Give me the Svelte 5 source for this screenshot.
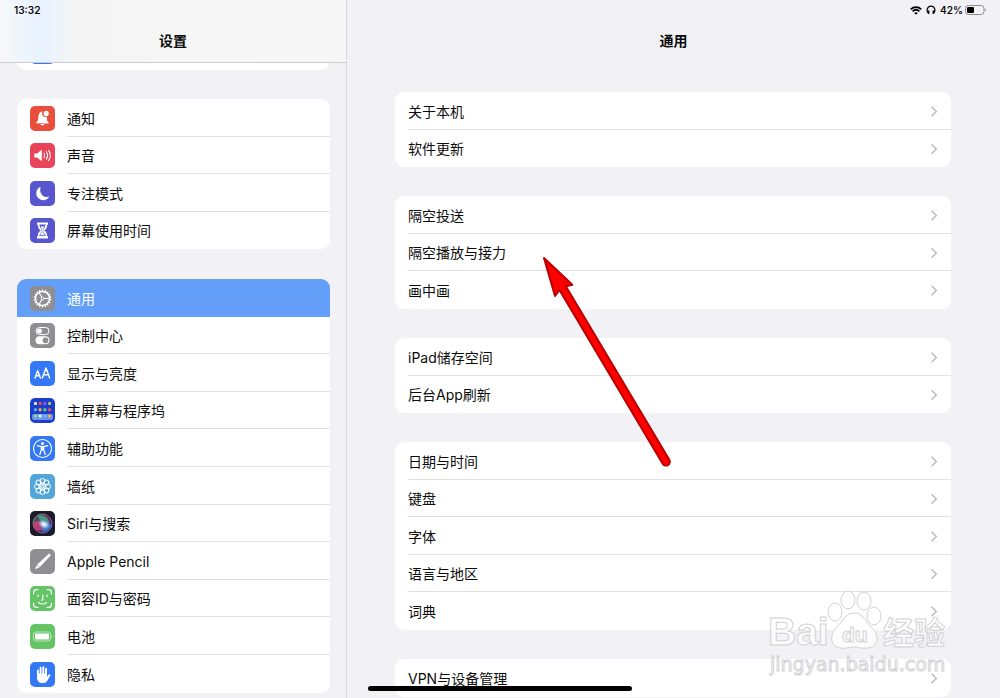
<script lang="ts">
	type Item = { icon: string; label: string; color: string };

	const sidebarGroups: Item[][] = [
		[
			{ icon: 'bell', label: '通知', color: '#ea4e3d' },
			{ icon: 'speaker', label: '声音', color: '#ea445a' },
			{ icon: 'moon', label: '专注模式', color: '#5756ce' },
			{ icon: 'hourglass', label: '屏幕使用时间', color: '#5756ce' },
		],
		[
			{ icon: 'gear', label: '通用', color: '#8e8e93' },
			{ icon: 'toggles', label: '控制中心', color: '#8e8e93' },
			{ icon: 'text', label: '显示与亮度', color: '#3478f6' },
			{ icon: 'home', label: '主屏幕与程序坞', color: '#1c3fcb' },
			{ icon: 'access', label: '辅助功能', color: '#3478f6' },
			{ icon: 'flower', label: '墙纸', color: '#54a5da' },
			{ icon: 'siri', label: 'Siri与搜索', color: '#1b1b2c' },
			{ icon: 'pencil', label: 'Apple Pencil', color: '#8e8e93' },
			{ icon: 'face', label: '面容ID与密码', color: '#65c466' },
			{ icon: 'battery', label: '电池', color: '#65c466' },
			{ icon: 'hand', label: '隐私', color: '#3478f6' },
		],
	];

	const generalGroups = [
		['关于本机', '软件更新'],
		['隔空投送', '隔空播放与接力', '画中画'],
		['iPad储存空间', '后台App刷新'],
		['日期与时间', '键盘', '字体', '语言与地区', '词典'],
		['VPN与设备管理'],
	];

	let selected = $state('通用');

	const teeth = Array.from({ length: 18 }, (_, i) => i * 20);
	const petals = Array.from({ length: 8 }, (_, i) => i * 45);
	const appDots = [
		['#e8e4c8', '#f0524f', '#9a5be0', '#a5cf55'],
		['#4cb4f0', '#f5a93c', '#5fd08a', '#ef4a5a'],
		['#7fe08a', '#e8f0ff', '#6cb8ff', '#f4a25e'],
	];
</script>

{#snippet icon(name: string)}
	<svg viewBox="0 0 25 25" width="25" height="25" aria-hidden="true">
		{#if name === 'bell'}
			<path d="M6 17.2c0-.9 1.9-1.5 2.2-4 .4-4 .5-7 4.2-7.9a3.5 3.5 0 0 0 4.3 5.2c.2 3.9.7 5.4 1.7 6 .4.3.4.7.4.9z" fill="#fff" />
			<path d="M10.500 18.1h4c-.3 1.900-3.700 1.900-4 0z" fill="#fff" />
			<circle cx="16.2" cy="7.4" r="2.6" fill="#fff" />
		{:else if name === 'speaker'}
			<path d="M4.300 10.400h2.900l3.800-3.200c.4-.3.8 0 .8.4v9.800c0 .4-.4.7-.8.4l-3.800-3.200H4.300z" fill="#fff" />
			<path d="M14 10.300c.9 1.400.9 3 0 4.400M16.300 8.800c1.600 2.400 1.600 5 0 7.400M18.600 7.400c2.200 3.300 2.200 6.900 0 10.200" fill="none" stroke="#fff" stroke-width="1.1" stroke-linecap="round" />
		{:else if name === 'moon'}
			<path d="M10.700 5.700a7 7 0 1 0 8.700 9.900c-5.900 2.200-10.900-3.600-8.700-9.900z" fill="#fff" />
		{:else if name === 'hourglass'}
			<path d="M7 4.600h11v2.200h-.8c-.1 3-1 4.300-3 5.700 2 1.400 2.900 2.700 3 5.700h.8v2.200H7v-2.200h.8c.1-3 1-4.300 3-5.700-2-1.400-2.900-2.700-3-5.700H7z" fill="#fff" />
			<path d="M9.500 6.500h6c-.1 2.200-.8 3.400-2.200 4.500v3.200l2.300 2.800v1H9.400v-1l2.300-2.800V11c-1.400-1.100-2.100-2.300-2.200-4.500z" fill="#5756ce" />
			<path d="M10.300 8.500h4.400L12.900 11v3.500l2 2.700h-4.800l2-2.700V11z" fill="#fff" />
		{:else if name === 'gear'}
			<g fill="none" stroke="#fff">
				<circle cx="12.5" cy="12.5" r="7" stroke-width="1.500" />
				{#each teeth as a}
					<path d="M12.500 5.500V3.500" stroke-width="1.3" transform="rotate({a} 12.5 12.5)" />
				{/each}
				<circle cx="12.5" cy="12.5" r="1.4" stroke-width="1" />
				<path d="M13.900 12.500h5.500M11.800 11.300L9 6.500M11.800 13.700L9 18.500" stroke-width="1.1" />
			</g>
		{:else if name === 'toggles'}
			<rect x="6" y="4.5" width="13" height="7" rx="3.5" fill="none" stroke="#fff" stroke-width="1" />
			<circle cx="9.5" cy="8" r="2.500" fill="#fff" />
			<rect x="5.5" y="13.3" width="14" height="8" rx="4" fill="#fff" />
			<circle cx="15.5" cy="17.3" r="2.9" fill="#8e8e93" />
		{:else if name === 'text'}
			<g fill="none" stroke="#fff" stroke-width="1.4" stroke-linecap="round" stroke-linejoin="round">
				<path d="M5 17l2.700-7.300L10.400 17M6 14.700h3.500" />
				<path d="M12.300 17L16 7l3.700 10M13.600 13.700h4.800" />
			</g>
		{:else if name === 'home'}
			<rect x="2" y="16" width="21" height="6" rx="2" fill="#6d93ea" />
			{#each appDots as line, r}
				{#each line as c, i}
					<rect x={4 + i * 4.7} y={4 + r * 6.3} width="2.9" height="2.9" rx="0.7" fill={c} />
				{/each}
			{/each}
		{:else if name === 'access'}
			<circle cx="12.5" cy="12.5" r="9" fill="none" stroke="#fff" stroke-width="1.1" />
			<circle cx="12.5" cy="7.4" r="1.5" fill="#fff" />
			<path d="M7.300 9.700l4 .9v3.100l-1.500 4.800M17.700 9.700l-4 .9v3.100l1.500 4.800" fill="none" stroke="#fff" stroke-width="1.2" stroke-linecap="round" stroke-linejoin="round" />
			<path d="M11.200 10h2.600v4.500h-2.600z" fill="#fff" />
		{:else if name === 'flower'}
			<g fill="none" stroke="#fff" stroke-width="1">
				{#each petals as a}
					<circle cx="12.5" cy="6.9" r="2.4" transform="rotate({a} 12.5 12.5)" />
					<circle cx="12.5" cy="9.9" r="1.2" stroke-width="0.7" transform="rotate({a + 22} 12.5 12.5)" />
				{/each}
				<circle cx="12.5" cy="12.5" r="1.7" />
			</g>
		{:else if name === 'siri'}
			<defs>
				<linearGradient id="siri-ring" x1="0" y1="0" x2="1" y2="1">
					<stop offset="0" stop-color="#47c987" />
					<stop offset="0.45" stop-color="#b53a74" />
					<stop offset="1" stop-color="#3d7df0" />
				</linearGradient>
				<radialGradient id="siri-core">
					<stop offset="0" stop-color="#fff" />
					<stop offset="0.4" stop-color="#c7dff8" stop-opacity="0.9" />
					<stop offset="1" stop-color="#4c6fd0" stop-opacity="0" />
				</radialGradient>
			</defs>
			<circle cx="12.5" cy="12.5" r="9.5" fill="url(#siri-ring)" fill-opacity="0.5" stroke="url(#siri-ring)" />
			<path d="M4 12c4-4 8-2 10 1s-3 8-7 6-4-5-3-7z" fill="#e5457c" fill-opacity="0.7" />
			<path d="M8 5c8-2 12 4 11 8-3 2-9-1-11-8z" fill="#41bd9b" fill-opacity="0.7" />
			<path d="M12 14c4 0 7-2 9 0-1 4-5 7-9 6z" fill="#3e8cf6" fill-opacity="0.7" />
			<ellipse cx="14" cy="13.3" rx="7" ry="5" fill="url(#siri-core)" transform="rotate(25 14 13.3)" />
		{:else if name === 'pencil'}
			<path d="M18.500 4.900c1.100-.7 2.600.8 1.900 1.900L9.700 18.200l-4 1.900c-.5.2-.8-.1-.6-.6l2.200-3.900z" fill="#fff" />
			<path d="M6.800 15.800l2.600 2.300" stroke="#8e8e93" stroke-width="0.700" />
		{:else if name === 'face'}
			<g fill="none" stroke="#fff" stroke-width="1.2" stroke-linecap="round">
				<path d="M3.600 8V6.200a2.600 2.600 0 0 1 2.600-2.600H8M17 3.600h1.800a2.600 2.600 0 0 1 2.600 2.600V8M21.400 17v1.800a2.600 2.600 0 0 1-2.600 2.600H17M8 21.400H6.200a2.600 2.600 0 0 1-2.600-2.600V17" />
				<path d="M8 9v1.600M17 9v1.600M12.800 9v4.300c0 .6-.4.9-1.200.9M8.500 16.500c2.300 2 5.700 2 8 0" />
			</g>
		{:else if name === 'battery'}
			<rect x="3.5" y="8" width="17" height="9" rx="2.3" fill="none" stroke="#fff" stroke-opacity="0.7" stroke-width="0.8" />
			<rect x="5" y="9.5" width="14" height="6" rx="1" fill="#fff" />
			<path d="M21.600 11v3c1.200-.6 1.200-2.400 0-3z" fill="#fff" fill-opacity="0.8" />
		{:else if name === 'hand'}
			<path d="M7.900 8.500V14M10.600 5.800V13M13.300 5.200V13M16 6.800V14" stroke="#fff" stroke-width="1.900" stroke-linecap="round" />
			<path d="M7 11.500h10v3.200l1.800-2.200c.7-.7 1.900 0 1.500.9l-2.800 5.200c-1 1.700-2.400 2.500-4.600 2.500-4 0-5.900-2.300-5.900-5.800z" fill="#fff" />
		{/if}
	</svg>
{/snippet}

<div class="screen">
	<aside class="sidebar">
		<header class="bar bar--side">
			<div class="status"><time>13:32</time></div>
			<h1>设置</h1>
		</header>
		<div class="peek"><span class="tile"></span></div>
		<nav class="groups groups--side">
			{#each sidebarGroups as group}
				<ul class="group">
					{#each group as item}
						<li class="row" class:selected={selected === item.label}>
							<a href="#{item.icon}" onclick={() => (selected = item.label)}>
								<span class="tile" style="background: {item.color}">{@render icon(item.icon)}</span>
								<span class="label">{item.label}</span>
							</a>
						</li>
					{/each}
				</ul>
			{/each}
		</nav>
	</aside>

	<main class="detail">
		<header class="bar">
			<div class="status status--right">
				<svg viewBox="0 0 12 9" width="12" height="9" aria-label="Wi-Fi">
					<path d="M.7 3.300c3.100-2.900 7.500-2.900 10.600 0M2.600 5.300c2-1.900 4.800-1.900 6.800 0" fill="none" stroke="#000" stroke-width="1.800" />
					<path d="M4.200 6.900c1.100-1 2.500-1 3.600 0L6 8.800z" />
				</svg>
				<svg viewBox="0 0 10 10" width="10" height="10" aria-label="耳机">
					<path d="M2.600 8.500C-.4 5.500 1.500 1.200 5 1.200s5.400 4.300 2.400 7.300" fill="none" stroke="#000" stroke-width="1.2" />
					<path d="M1.400 5.400l2 .2v3.600l-1.300-.6zM8.600 5.400l-2 .2v3.600l1.300-.6z" />
				</svg>
				<span>42%</span>
				<svg viewBox="0 0 22 10" width="22" height="10" aria-label="电量">
					<rect x="0.5" y="0.5" width="18.5" height="9" rx="2.8" fill="none" stroke="#8d8d91" />
					<rect x="2" y="2" width="7" height="6" rx="1.2" />
					<path d="M20.300 3.500v3c1.200-.5 1.200-2.500 0-3z" fill="#8d8d91" />
				</svg>
			</div>
			<h2>通用</h2>
		</header>
		<div class="groups groups--detail">
			{#each generalGroups as group}
				<ul class="group">
					{#each group as label}
						<li class="row">
							<a href="#{label}">
								<span class="label">{label}</span>
								<svg class="chevron" viewBox="0 0 8 12" width="8" height="12" aria-hidden="true">
									<path d="M1.500 1.200L6.300 6l-4.800 4.800" fill="none" stroke="#bdbdc1" stroke-width="1.5" />
								</svg>
							</a>
						</li>
					{/each}
				</ul>
			{/each}
		</div>
	</main>

	<svg class="arrow" viewBox="0 0 140 220" width="140" height="220" aria-hidden="true">
		<path
			d="M10 8L38.300 34.700L31.800 36.300L135.300 209.800A3.800 3.800 0 0 1 128.700 213.700L25.500 40L21 46Z"
			fill="#fe0000"
			stroke="#b80000"
			stroke-width="2"
			stroke-linejoin="round"
		/>
	</svg>

	<svg class="watermark" viewBox="0 0 190 90" width="190" height="90">
		<text x="4" y="56" class="mark mark-name">Bai</text>
		<g class="mark">
			<ellipse cx="71" cy="23" rx="7" ry="9" />
			<ellipse cx="84" cy="11" rx="7" ry="9" />
			<ellipse cx="100" cy="12" rx="7" ry="9" />
			<ellipse cx="110" cy="27" rx="7" ry="9" />
			<path d="M90 24c9 0 11 8 17 14 9 8 8 19-3 21-6 1-9-1-14-1s-8 2-14 1c-10-2-11-13-3-21 6-6 8-14 17-14z" />
		</g>
		<text x="78" y="53" class="mark mark-du">du</text>
		<text x="119" y="55" class="mark mark-cn">经验</text>
		<text x="6" y="82" class="mark mark-url">jingyan.baidu.com</text>
	</svg>

	<div class="home-indicator"></div>
</div>

<style>
	:global(body) {
		background: #f1f1f6;
	}

	.screen {
		position: relative;
		display: grid;
		grid-template-columns: 347px 1fr;
		height: 100vh;
		overflow: hidden;
		background: #f1f1f6;
		color: #0b0b0c;
		font-family: Inter, 'Noto Sans CJK SC', sans-serif;
		font-size: 14px;
		line-height: 20px;
	}

	.sidebar {
		border-right: 1px solid #d8d8dd;
		min-width: 0;
	}

	/* ── Header bars ── */
	.bar {
		position: relative;
		display: flex;
		flex-direction: column;
		gap: 11px;
		height: 62px;
	}

	.bar--side {
		z-index: 1;
		background: linear-gradient(90deg, #f6f8fa 0, #e8f2fd 40px, #ecf3fb 56px, #f5f5f5 72px, #f7f7f7 100%);
		border-bottom: 1px solid #cbcbd0;
	}

	.status {
		display: flex;
		align-items: center;
		gap: 4px;
		height: 20px;
		padding: 0 13px 0 14px;
		font-size: 10px;
		font-weight: 600;
	}

	.status--right {
		justify-content: flex-end;
	}

	.status--right span {
		margin-right: -2px;
	}

	h1,
	h2 {
		margin: 0;
		font-size: 14px;
		font-weight: 600;
		line-height: 20px;
		text-align: center;
	}

	/* ── Grouped lists ── */
	.groups {
		display: flex;
		flex-direction: column;
	}

	.groups--side {
		gap: 30px;
		padding: 29px 16px 0 17px;
	}

	.groups--detail {
		gap: 29px;
		padding: 30px 49px 0 48px;
	}

	.group {
		margin: 0;
		padding: 0;
		list-style: none;
		background: #fff;
		border-radius: 9px;
		overflow: hidden;
	}

	.row a {
		display: flex;
		align-items: center;
		height: 38px;
		padding-left: 13px;
		color: inherit;
		text-decoration: none;
	}

	/* keeps the average row pitch between 37 and 38 */
	.row:nth-child(5n + 2) a,
	.row:nth-child(5n + 4) a {
		height: 37px;
	}

	.label,
	.chevron {
		align-self: stretch;
		padding-top: 2px;
		border-bottom: 1px solid #e2e2e5;
	}

	.label {
		display: flex;
		flex: 1;
		align-items: center;
	}

	.chevron {
		height: auto;
		padding-right: 13px;
	}

	.row:last-child .label,
	.row:last-child .chevron,
	.row.selected .label {
		border-bottom-color: transparent;
	}

	.groups--side a {
		gap: 12px;
	}

	.selected {
		background: #639ff8;
		color: #fff;
	}

	.tile {
		flex: none;
		width: 25px;
		height: 25px;
		border-radius: 5px;
		background: #3478f6;
		overflow: hidden;
	}

	.tile svg {
		display: block;
	}

	/* last row of the group scrolled under the header */
	.peek {
		display: flex;
		align-items: center;
		height: 38px;
		margin: -31px 16px 0 17px;
		padding: 1px 0 0 13px;
		box-sizing: border-box;
		background: #fff;
		border-radius: 0 0 9px 9px;
	}

	/* ── Overlays ── */
	.arrow {
		position: absolute;
		left: 534px;
		top: 250px;
		pointer-events: none;
	}

	.watermark {
		position: absolute;
		right: 46px;
		bottom: 19px;
		overflow: visible;
		pointer-events: none;
	}

	.mark {
		fill: #fff;
		fill-opacity: 0.8;
		stroke: #d2d2d5;
		stroke-width: 1;
	}

	.mark-name {
		font: 700 39px 'Liberation Sans', sans-serif;
	}

	.mark-du {
		font: 700 21px 'Liberation Sans', sans-serif;
	}

	.mark-cn {
		font: 700 31px 'Noto Sans CJK SC', sans-serif;
	}

	.mark-url {
		font: 400 19px 'DejaVu Sans', sans-serif;
	}

	.home-indicator {
		position: absolute;
		left: 50%;
		bottom: 7px;
		width: 264px;
		height: 5px;
		border-radius: 3px;
		background: #000;
		transform: translateX(-50%);
	}
</style>
